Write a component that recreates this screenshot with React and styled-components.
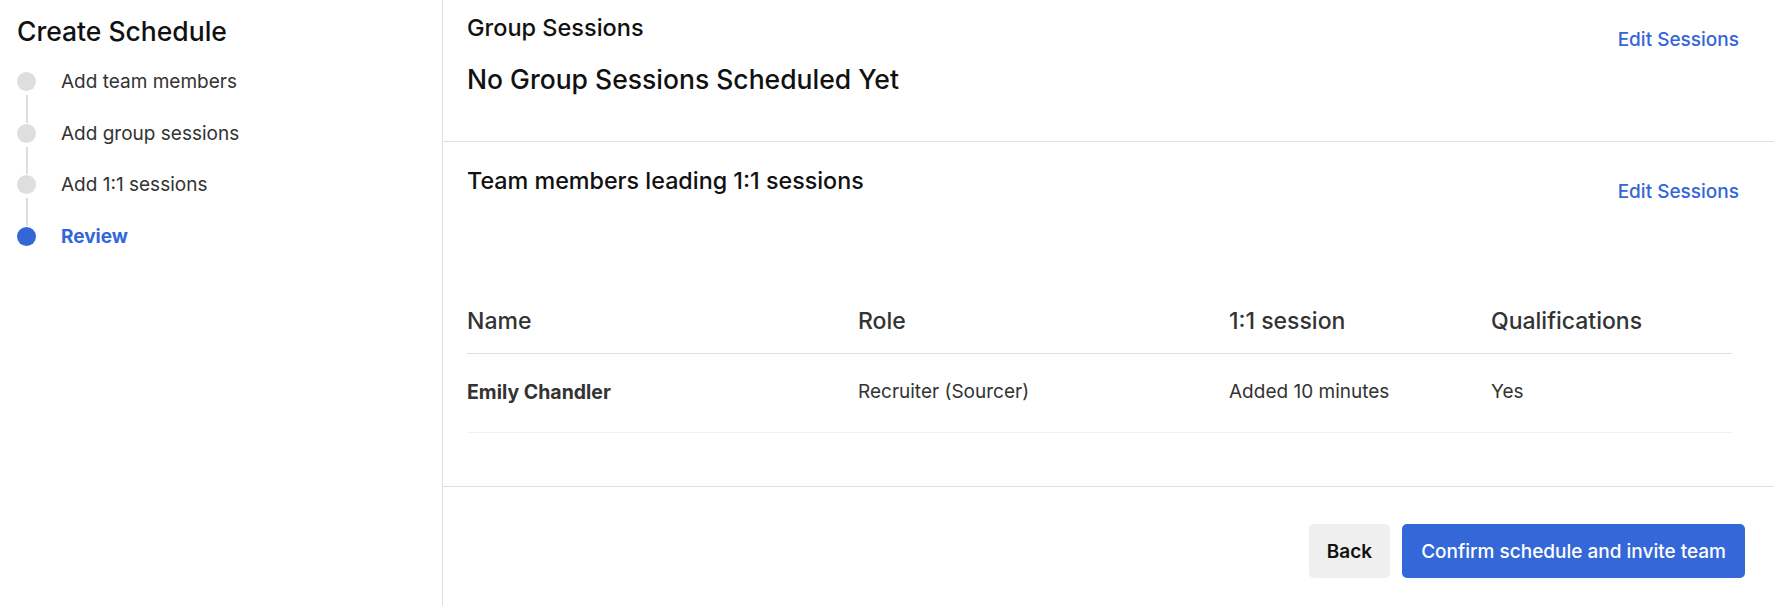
import React from "react";
import styled, { createGlobalStyle } from "styled-components";

const GlobalStyle = createGlobalStyle`
  html, body {
    margin: 0;
    padding: 0;
    background: #ffffff;
  }
  body {
    font-family: Inter, "Noto Sans", "Liberation Sans", sans-serif;
    color: #222222;
  }
  * {
    box-sizing: border-box;
  }
`;

const BLUE = "#3367d6";

const Page = styled.div`
  display: flex;
  min-height: 100vh;
`;

const Sidebar = styled.aside`
  width: 443px;
  flex-shrink: 0;
  border-right: 1px solid #e0e0e0;
  padding: 15px 0 0 17px;
`;

const SidebarTitle = styled.h1`
  margin: 0;
  font-size: 26.5px;
  line-height: 32px;
  font-weight: 500;
  color: #111111;
`;

const StepList = styled.ol`
  list-style: none;
  margin: 25px 0 0;
  padding: 0;
`;

const StepRow = styled.li`
  display: flex;
  align-items: center;
  height: 19px;
  gap: 25px;
`;

const StepDot = styled.span`
  width: 19px;
  height: 19px;
  border-radius: 50%;
  flex-shrink: 0;
  background: ${(p) => (p.$active ? BLUE : "#dedede")};
`;

const StepLabel = styled.span`
  font-size: 19px;
  font-weight: ${(p) => (p.$active ? 700 : 400)};
  color: ${(p) => (p.$active ? BLUE : "#333333")};
`;

const Connector = styled.li`
  width: 2px;
  height: 27.5px;
  margin: 4px 0 1px 8.5px;
  background: #dedede;
`;

const Main = styled.main`
  flex: 1;
  min-width: 0;
  display: flex;
  flex-direction: column;
`;

const Section = styled.section`
  height: ${(p) => p.$height}px;
  border-bottom: 1px solid #e0e0e0;
  padding: ${(p) => p.$top}px 35px 0 24px;
  display: flex;
  flex-direction: column;
`;

const SectionHead = styled.div`
  display: flex;
  justify-content: space-between;
  align-items: flex-start;
`;

const SectionLabel = styled.h2`
  margin: 0;
  font-size: ${(p) => p.$size}px;
  line-height: 28px;
  font-weight: 500;
  color: #111111;
`;

const EmptyNote = styled.p`
  margin: 22px 0 0;
  font-size: 26.5px;
  line-height: 30px;
  font-weight: 500;
  color: #111111;
`;

const EditLink = styled.a`
  margin-top: ${(p) => p.$offset}px;
  font-size: 19px;
  line-height: 22px;
  font-weight: 500;
  color: ${BLUE};
  text-decoration: none;
  cursor: pointer;
  white-space: nowrap;
`;

const Table = styled.div`
  margin: 104px 7px 0 0;
`;

const TableRow = styled.div`
  display: grid;
  grid-template-columns: 391px 371px 262px 1fr;
  border-bottom: 1px solid ${(p) => (p.$head ? "#e0e0e0" : "#f2f2f2")};
  padding: ${(p) => (p.$head ? "0 0 18px" : "26px 0 28px")};
`;

const HeadCell = styled.div`
  font-size: 23px;
  line-height: 28px;
  font-weight: 500;
  color: #333333;
`;

const Cell = styled.div`
  font-size: ${(p) => (p.$strong ? 19.5 : 19)}px;
  line-height: 24px;
  font-weight: ${(p) => (p.$strong ? 700 : 400)};
  color: #333333;
`;

const Footer = styled.footer`
  display: flex;
  justify-content: flex-end;
  gap: 12px;
  padding: 37px 29px 0 0;
`;

const Button = styled.button`
  height: 54px;
  padding: 0 ${(p) => (p.$primary ? 19 : 18)}px;
  border: none;
  border-radius: 5px;
  font-family: inherit;
  font-size: 19px;
  font-weight: ${(p) => (p.$primary ? 500 : 600)};
  background: ${(p) => (p.$primary ? "#3468d9" : "#efefef")};
  color: ${(p) => (p.$primary ? "#ffffff" : "#111111")};
  cursor: pointer;
`;

const steps = [
  { label: "Add team members" },
  { label: "Add group sessions" },
  { label: "Add 1:1 sessions" },
  { label: "Review", active: true },
];

const members = [
  {
    name: "Emily Chandler",
    role: "Recruiter (Sourcer)",
    session: "Added 10 minutes",
    qualified: "Yes",
  },
];

export default function App() {
  return (
    <>
      <GlobalStyle />
      <Page>
        <Sidebar>
          <SidebarTitle>Create Schedule</SidebarTitle>
          <StepList>
            {steps.map((step, i) => (
              <React.Fragment key={step.label}>
                {i > 0 && <Connector aria-hidden="true" />}
                <StepRow>
                  <StepDot $active={step.active} />
                  <StepLabel $active={step.active}>{step.label}</StepLabel>
                </StepRow>
              </React.Fragment>
            ))}
          </StepList>
        </Sidebar>
        <Main>
          <Section $height={142} $top={14}>
            <SectionHead>
              <div>
                <SectionLabel $size={23.5}>Group Sessions</SectionLabel>
                <EmptyNote>No Group Sessions Scheduled Yet</EmptyNote>
              </div>
              <EditLink $offset={15}>Edit Sessions</EditLink>
            </SectionHead>
          </Section>
          <Section $height={345} $top={25}>
            <SectionHead>
              <SectionLabel $size={23.3}>Team members leading 1:1 sessions</SectionLabel>
              <EditLink $offset={14}>Edit Sessions</EditLink>
            </SectionHead>
            <Table>
              <TableRow $head>
                <HeadCell>Name</HeadCell>
                <HeadCell>Role</HeadCell>
                <HeadCell>1:1 session</HeadCell>
                <HeadCell>Qualifications</HeadCell>
              </TableRow>
              {members.map((m) => (
                <TableRow key={m.name}>
                  <Cell $strong>{m.name}</Cell>
                  <Cell>{m.role}</Cell>
                  <Cell>{m.session}</Cell>
                  <Cell>{m.qualified}</Cell>
                </TableRow>
              ))}
            </Table>
          </Section>
          <Footer>
            <Button>Back</Button>
            <Button $primary>Confirm schedule and invite team</Button>
          </Footer>
        </Main>
      </Page>
    </>
  );
}
